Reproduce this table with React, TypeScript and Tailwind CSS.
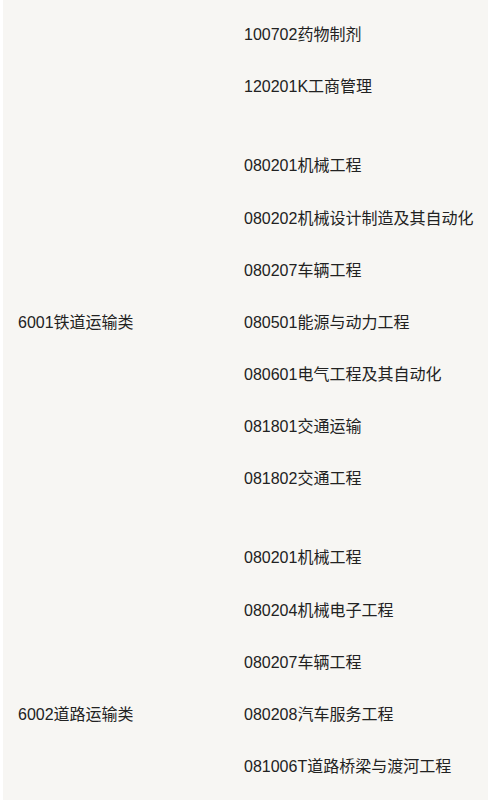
const groups = [
  {
    label: "",
    majors: ["100702药物制剂", "120201K工商管理"],
  },
  {
    label: "6001铁道运输类",
    majors: [
      "080201机械工程",
      "080202机械设计制造及其自动化",
      "080207车辆工程",
      "080501能源与动力工程",
      "080601电气工程及其自动化",
      "081801交通运输",
      "081802交通工程",
    ],
  },
  {
    label: "6002道路运输类",
    majors: [
      "080201机械工程",
      "080204机械电子工程",
      "080207车辆工程",
      "080208汽车服务工程",
      "081006T道路桥梁与渡河工程",
    ],
  },
]

export default function App() {
  return (
    <div
      className="h-[800px] overflow-hidden bg-white pl-[3px] text-[16px] text-[#222]"
      style={{ fontFamily: '"Liberation Sans", Arial, "Noto Sans CJK SC", sans-serif' }}
    >
      <div className="h-full overflow-hidden bg-[#f7f6f3]">
        <div className="-mt-[4.3px]">
          {groups.map((group, i) => (
            <div key={i} className="flex py-[13.4px]">
              {/* Category, sits on the 4th line of its group */}
              <div className="w-[226px] shrink-0 px-[15px]">
                {group.label && (
                  <div className="mt-[156.6px] flex h-[52.2px] items-center whitespace-nowrap">{group.label}</div>
                )}
              </div>

              {/* Majors */}
              <div className="flex-1 px-[15px]">
                {group.majors.map((m) => (
                  <div key={m} className="flex h-[52.2px] items-center whitespace-nowrap">
                    {m}
                  </div>
                ))}
              </div>
            </div>
          ))}
        </div>
      </div>
    </div>
  )
}
